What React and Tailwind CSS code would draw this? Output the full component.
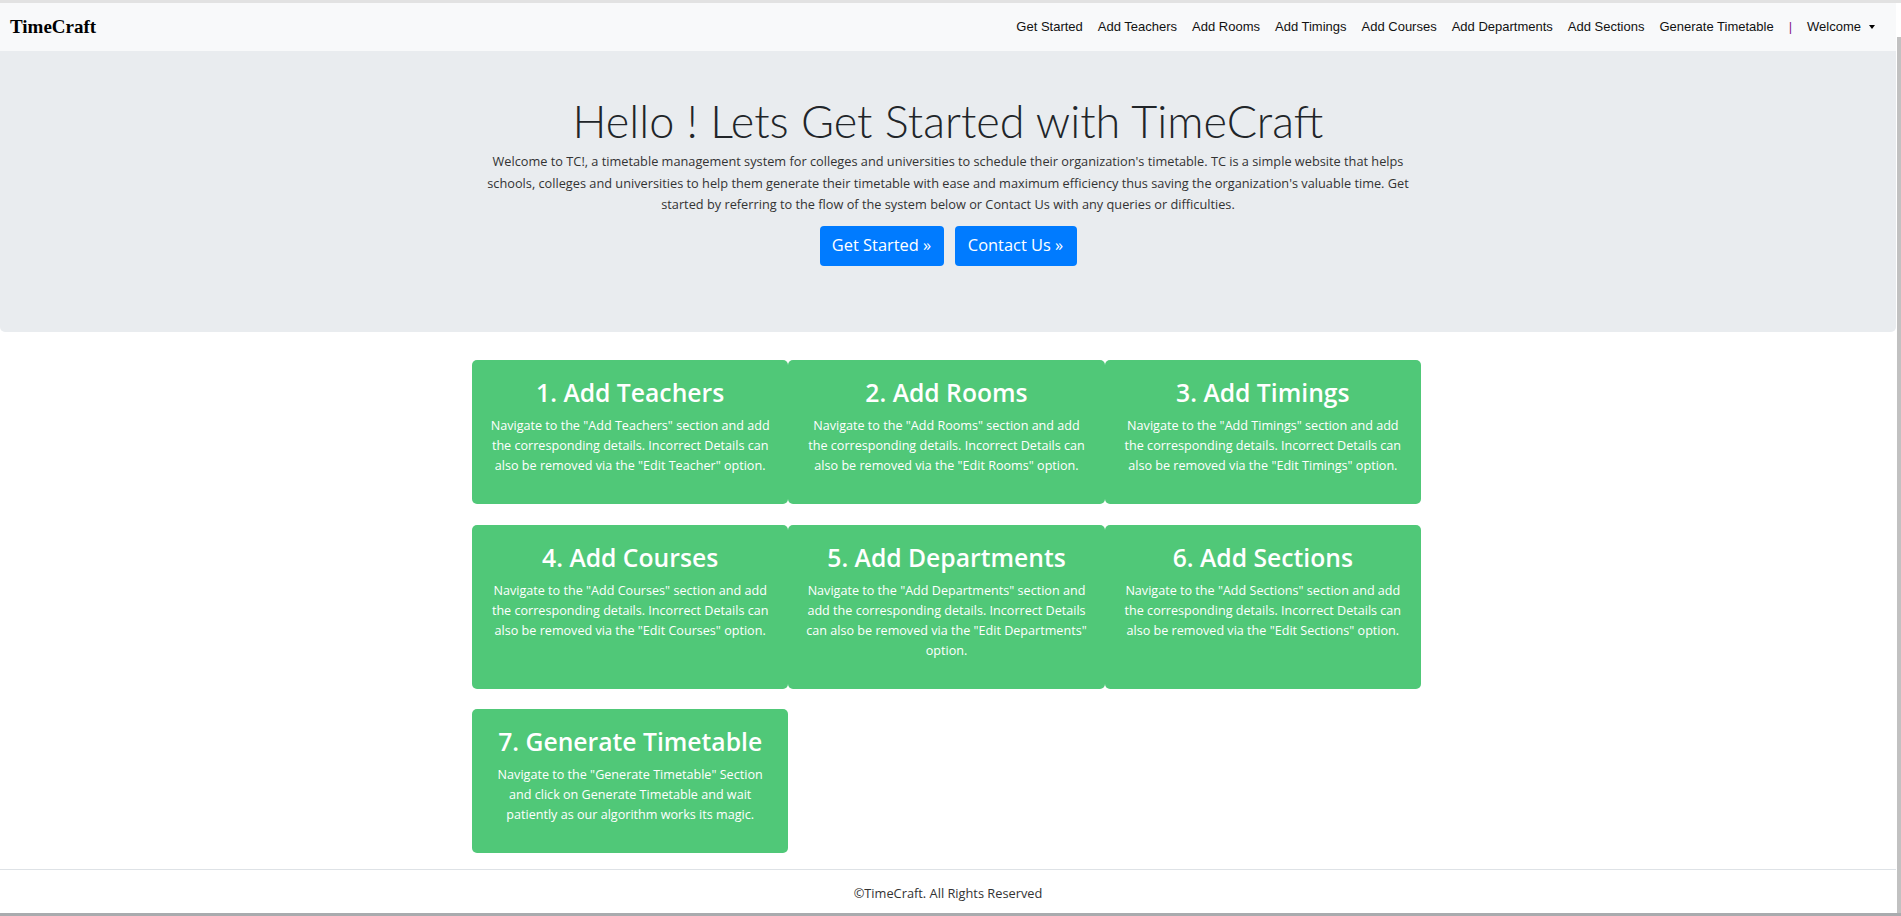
const navLinks = [
  "Get Started",
  "Add Teachers",
  "Add Rooms",
  "Add Timings",
  "Add Courses",
  "Add Departments",
  "Add Sections",
  "Generate Timetable",
];

const steps = [
  {
    title: "1. Add Teachers",
    text: 'Navigate to the "Add Teachers" section and add the corresponding details. Incorrect Details can also be removed via the "Edit Teacher" option.',
  },
  {
    title: "2. Add Rooms",
    text: 'Navigate to the "Add Rooms" section and add the corresponding details. Incorrect Details can also be removed via the "Edit Rooms" option.',
  },
  {
    title: "3. Add Timings",
    text: 'Navigate to the "Add Timings" section and add the corresponding details. Incorrect Details can also be removed via the "Edit Timings" option.',
  },
  {
    title: "4. Add Courses",
    text: 'Navigate to the "Add Courses" section and add the corresponding details. Incorrect Details can also be removed via the "Edit Courses" option.',
  },
  {
    title: "5. Add Departments",
    text: 'Navigate to the "Add Departments" section and add the corresponding details. Incorrect Details can also be removed via the "Edit Departments" option.',
  },
  {
    title: "6. Add Sections",
    text: 'Navigate to the "Add Sections" section and add the corresponding details. Incorrect Details can also be removed via the "Edit Sections" option.',
  },
  {
    title: "7. Generate Timetable",
    text: 'Navigate to the "Generate Timetable" Section and click on Generate Timetable and wait patiently as our algorithm works its magic.',
  },
];

function Navbar() {
  return (
    <nav className="flex h-[48px] shrink-0 items-center justify-between bg-[#f8f9fa] pl-[10px] pr-[21px]">
      <a
        href="#"
        className="text-[19px] font-bold text-black [font-family:'Liberation_Serif',serif]"
      >
        TimeCraft
      </a>
      <ul className="flex items-center gap-[15px] text-[13px] text-[#111] [font-family:'Liberation_Sans',Arial,sans-serif]">
        {navLinks.map((link) => (
          <li key={link}>
            <a href="#">{link}</a>
          </li>
        ))}
        <li className="text-[#8a1a8a]">|</li>
        <li className="flex items-center">
          <a href="#">Welcome</a>
          <span className="ml-[8px] h-0 w-0 border-x-[3.5px] border-t-[4px] border-x-transparent border-t-black" />
        </li>
      </ul>
    </nav>
  );
}

function Hero() {
  return (
    <header className="flex h-[281px] shrink-0 flex-col items-center rounded-b-[5px] bg-[#e9ecef] pt-[40px]">
      <h1 className="text-[45px] font-light leading-[60px] text-[#212529] [font-family:Lato,sans-serif]">
        Hello ! Lets Get Started with TimeCraft
      </h1>
      <p className="max-w-[945px] text-center text-[12.75px] leading-[21.5px] text-[#333]">
        Welcome to TC!, a timetable management system for colleges and
        universities to schedule their organization's timetable. TC is a
        simple website that helps schools, colleges and universities to help
        them generate their timetable with ease and maximum efficiency thus
        saving the organization's valuable time. Get started by referring to
        the flow of the system below or Contact Us with any queries or
        difficulties.
      </p>
      <div className="mt-[10px] flex gap-[11px]">
        <a
          href="#"
          className="flex h-[40px] w-[124px] items-center justify-center rounded-[4px] bg-[#007bff] text-[16.4px] text-white"
        >
          Get Started »
        </a>
        <a
          href="#"
          className="flex h-[40px] w-[122px] items-center justify-center rounded-[4px] bg-[#007bff] text-[16.4px] text-white"
        >
          Contact Us »
        </a>
      </div>
    </header>
  );
}

function StepCard({ title, text }) {
  return (
    <div className="rounded-[5px] bg-[#50c878] px-[14px] pb-[28px] pt-[16px] text-center text-white">
      <h2 className="text-[24.7px] font-semibold leading-[34px]">{title}</h2>
      <p className="mt-[6px] text-[12.6px] leading-[20px]">{text}</p>
    </div>
  );
}

function App() {
  return (
    <div className="flex h-[916px] flex-col overflow-hidden bg-white [font-family:'Open_Sans',sans-serif]">
      <div className="h-[3px] shrink-0 bg-[#e2e2e2]" />
      <div className="flex min-h-0 flex-1">
        <div className="flex min-w-0 flex-1 flex-col">
          <Navbar />
          <Hero />
          <main className="flex flex-1 justify-center pr-[3px] pt-[28px]">
            <div className="grid h-fit w-[949px] grid-cols-3 gap-y-[20.5px]">
              {steps.map((step) => (
                <StepCard key={step.title} {...step} />
              ))}
            </div>
          </main>
          <footer className="flex h-[44px] shrink-0 items-center justify-center border-t border-[#dee2e6] pt-[4px] text-[12.8px] text-[#333]">
            ©TimeCraft. All Rights Reserved
          </footer>
        </div>
        <div className="flex w-[5px] shrink-0 pt-[34px]">
          <div className="ml-[1px] w-[4px] bg-[#c1c1c1]" />
        </div>
      </div>
      <div className="h-[3px] shrink-0 bg-[#a9abae]" />
    </div>
  );
}

export default App;
